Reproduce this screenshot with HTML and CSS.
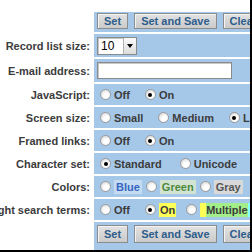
FILE: index.html
```html
<!DOCTYPE html>
<html lang="en">
<head>
    <meta charset="UTF-8">
    <title>Preferences</title>
    <link rel="stylesheet" href="styles.css">
</head>
<body>
<div class="frame">
    <form class="prefs">
        <div class="row row-buttons">
            <div class="label"></div>
            <div class="value">
                <button type="button" class="btn">Set</button>
                <button type="button" class="btn">Set and Save</button>
                <button type="button" class="btn">Clear</button>
            </div>
        </div>
        <div class="row row-field">
            <div class="label">Record list size:</div>
            <div class="value">
                <span class="select-box">
                    <select class="select">
                        <option>10</option>
                        <option>20</option>
                        <option>50</option>
                    </select>
                    <span class="select-arrow"></span>
                </span>
            </div>
        </div>
        <div class="row row-field">
            <div class="label">E-mail address:</div>
            <div class="value">
                <input type="text" class="text-input">
            </div>
        </div>
        <div class="row">
            <div class="label">JavaScript:</div>
            <div class="value">
                <label class="opt"><input type="radio" name="js">Off</label>
                <label class="opt"><input type="radio" name="js" checked>On</label>
            </div>
        </div>
        <div class="row">
            <div class="label">Screen size:</div>
            <div class="value">
                <label class="opt"><input type="radio" name="size">Small</label>
                <label class="opt"><input type="radio" name="size">Medium</label>
                <label class="opt"><input type="radio" name="size" checked>Large</label>
            </div>
        </div>
        <div class="row">
            <div class="label">Framed links:</div>
            <div class="value">
                <label class="opt"><input type="radio" name="frames">Off</label>
                <label class="opt"><input type="radio" name="frames" checked>On</label>
            </div>
        </div>
        <div class="row">
            <div class="label">Character set:</div>
            <div class="value">
                <label class="opt opt-wide"><input type="radio" name="charset" checked>Standard</label>
                <label class="opt"><input type="radio" name="charset">Unicode</label>
            </div>
        </div>
        <div class="row">
            <div class="label">Colors:</div>
            <div class="value">
                <label class="opt opt-tight"><input type="radio" name="colors"><span class="swatch blue">Blue</span></label>
                <label class="opt opt-tight"><input type="radio" name="colors"><span class="swatch green">Green</span></label>
                <label class="opt opt-tight"><input type="radio" name="colors"><span class="swatch gray">Gray</span></label>
            </div>
        </div>
        <div class="row">
            <div class="label">Highlight search terms:</div>
            <div class="value">
                <label class="opt"><input type="radio" name="hl">Off</label>
                <label class="opt opt-near"><input type="radio" name="hl" checked><span class="hl-on">On</span></label>
                <label class="opt"><input type="radio" name="hl"><span class="hl-multi">Multiple</span></label>
            </div>
        </div>
        <div class="row row-buttons row-last">
            <div class="label"></div>
            <div class="value">
                <button type="button" class="btn">Set</button>
                <button type="button" class="btn">Set and Save</button>
                <button type="button" class="btn">Clear</button>
            </div>
        </div>
    </form>
</div>
</body>
</html>
```

FILE: styles.css
```css
body {
    margin: 0;
    background: #fff;
}

.frame {
    width: 250px;
    height: 250px;
    border-right: 2px solid #000;
    border-bottom: 2px solid #000;
    overflow: hidden;
    background: #fff;
    font-family: "Liberation Sans", Arial, sans-serif;
    font-size: 11px;
    font-weight: bold;
    color: #3c3c3c;
}

.prefs {
    display: flex;
    flex-direction: column;
    gap: 2px;
    padding-top: 12px;
    margin: 0;
}

.row {
    display: flex;
    height: 21px;
}

.row-buttons {
    height: 20px;
}

.row-field {
    height: 23px;
}

.row-last {
    height: 30px;
}

.label {
    flex: 0 0 90px;
    width: 90px;
    min-width: 0;
    padding-right: 4px;
    display: flex;
    justify-content: flex-end;
    align-items: center;
    white-space: nowrap;
}

.value {
    flex: 0 0 300px;
    background: #a5c8e9;
    display: flex;
    align-items: center;
    padding-left: 3px;
    white-space: nowrap;
}

.row-buttons .value {
    align-items: flex-start;
    padding-top: 1px;
}

.row-last .value {
    padding-top: 3px;
}

.btn {
    height: 16px;
    padding: 0 6px;
    margin: 0 6px 0 0;
    font: bold 11px "Liberation Sans", Arial, sans-serif;
    color: #2d5d8b;
    background: linear-gradient(#e2e2e2, #cacaca);
    border: 1px solid #8c8c8c;
    box-shadow: inset 1px 1px 0 #f4f4f4;
}

.row-last .btn {
    height: 18px;
}

.select-box {
    display: inline-flex;
    height: 16px;
    border: 1px solid #8a8a8a;
    background: #fff;
    box-shadow: inset 1px 1px 0 #c8c8c8;
}

.select {
    appearance: none;
    -webkit-appearance: none;
    border: 0;
    background: transparent;
    width: 25px;
    padding: 0 0 0 3px;
    font: 12px "Liberation Sans", Arial, sans-serif;
    color: #000;
}

.select-arrow {
    width: 12px;
    border-left: 1px solid #b0b0b0;
    background: linear-gradient(#fafafa, #dcdcdc);
    display: flex;
    align-items: center;
    justify-content: center;
}

.select-arrow::after {
    content: "";
    border-left: 3px solid transparent;
    border-right: 3px solid transparent;
    border-top: 4px solid #000;
}

.text-input {
    width: 135px;
    height: 17px;
    box-sizing: border-box;
    border: 1px solid #8a8a8a;
    box-shadow: inset 1px 1px 0 #c8c8c8;
    padding: 0 2px;
    margin: 0;
}

.opt {
    display: inline-flex;
    align-items: center;
    margin-right: 12px;
}

.opt-wide {
    margin-right: 15px;
}

.opt-tight {
    margin-right: 1px;
}

.opt-near {
    margin-right: 7px;
}

.opt input {
    appearance: none;
    -webkit-appearance: none;
    width: 11px;
    height: 11px;
    margin: 0 3px 0 3px;
    border-radius: 50%;
    border: 1px solid #9a9a9a;
    background: radial-gradient(circle at 60% 65%, #ffffff 30%, #cfcfcf 100%);
    display: flex;
    align-items: center;
    justify-content: center;
}

.opt input:checked::after {
    content: "";
    width: 4px;
    height: 4px;
    border-radius: 50%;
    background: #000;
}

.swatch {
    padding: 1px 2px;
}

.blue {
    color: #3466c2;
    background: #c4dbf1;
}

.green {
    color: #4b8a3c;
    background: #d3e3d2;
}

.gray {
    color: #555;
    background: #d9d9d9;
}

.hl-on {
    background: #ffff55;
    padding: 1px 1px;
}

.hl-multi {
    padding: 1px 5px 1px 6px;
    background: linear-gradient(to right, #ffff55 0 6px, #a2ee88 6px, #a2ee88 calc(100% - 5px), #88ffff calc(100% - 5px));
}
```
